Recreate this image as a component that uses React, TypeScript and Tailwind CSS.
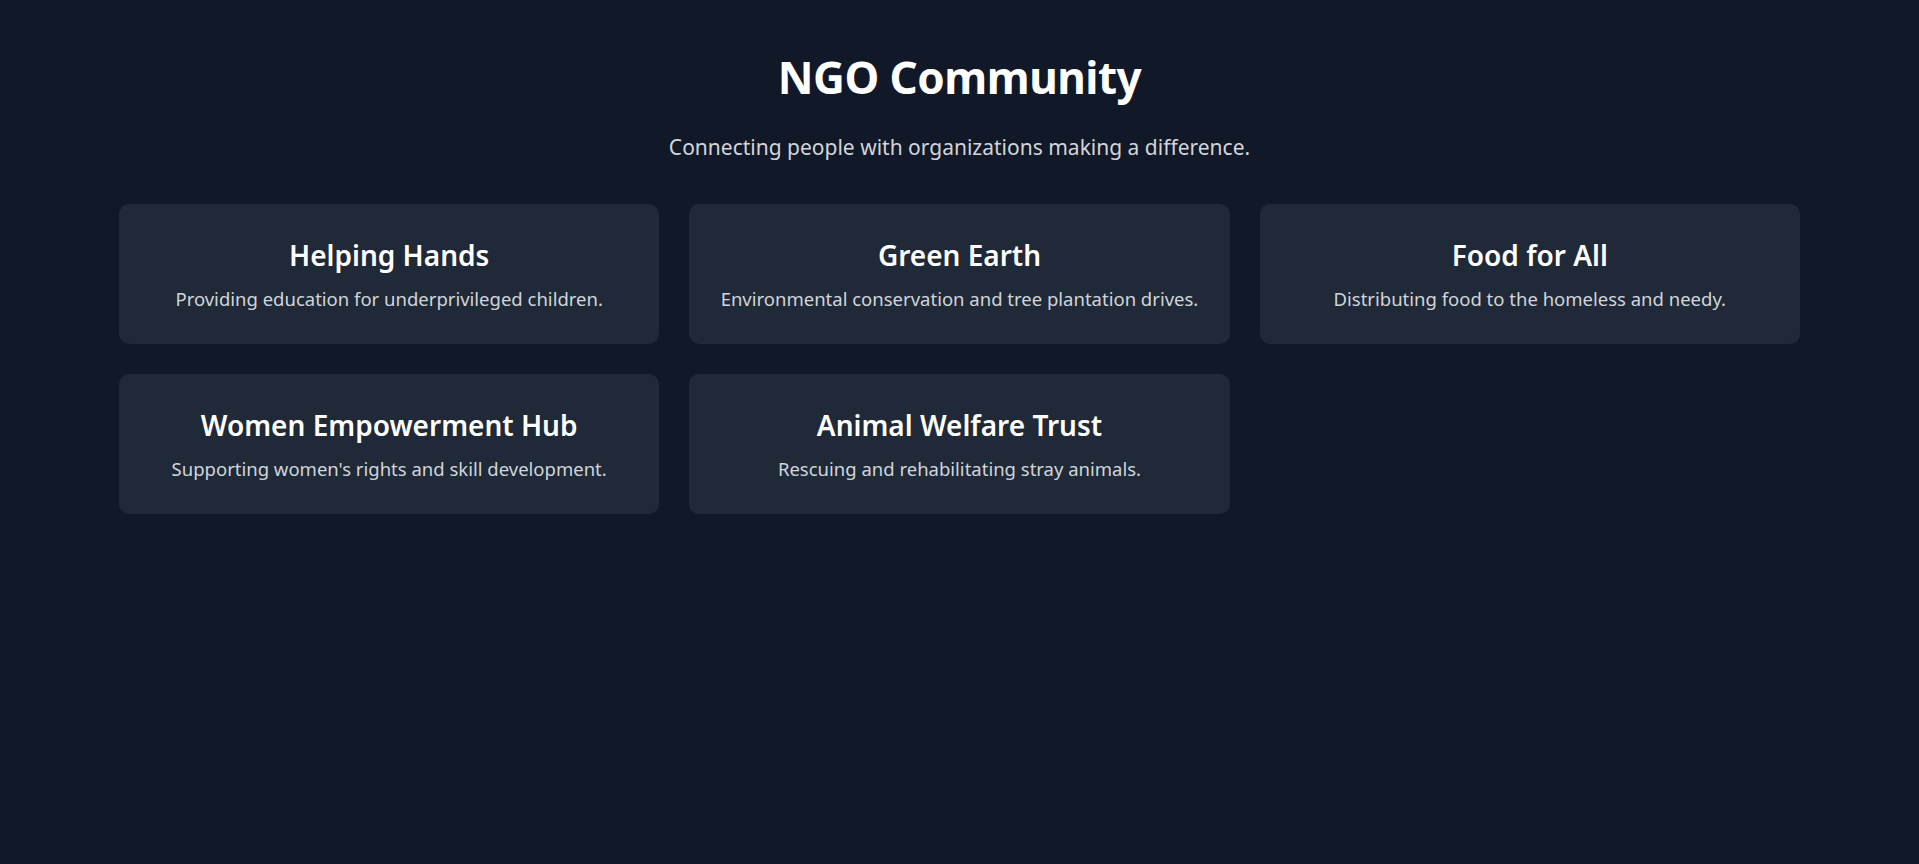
import React from "react";

const orgs = [
  { name: "Helping Hands", desc: "Providing education for underprivileged children." },
  { name: "Green Earth", desc: "Environmental conservation and tree plantation drives." },
  { name: "Food for All", desc: "Distributing food to the homeless and needy." },
  { name: "Women Empowerment Hub", desc: "Supporting women's rights and skill development." },
  { name: "Animal Welfare Trust", desc: "Rescuing and rehabilitating stray animals." },
];

export default function App() {
  return (
    <div
      className="min-h-[864px] w-full bg-[#111827] text-white"
      style={{ fontFamily: '"Noto Sans", "Open Sans", sans-serif' }}
    >
      <div className="flex flex-col items-center pt-[53px]">
        <h1 className="text-[44px] font-bold leading-[48px] tracking-[-0.5px]">NGO Community</h1>
        <p className="mt-[32px] text-[21px] leading-[28px] text-[#d1d5db]">
          Connecting people with organizations making a difference.
        </p>
      </div>
      <div className="mx-auto mt-[43px] grid w-[1681px] grid-cols-3 gap-[30px]">
        {orgs.map((o) => (
          <div key={o.name} className="flex h-[140px] flex-col items-center rounded-[10px] bg-[#1f2937] pt-[33px]">
            <h2 className="text-[28px] font-semibold leading-[36px]">{o.name}</h2>
            <p className="mt-[12px] text-[18.5px] leading-[28px] text-[#d1d5db]">{o.desc}</p>
          </div>
        ))}
      </div>
    </div>
  );
}
